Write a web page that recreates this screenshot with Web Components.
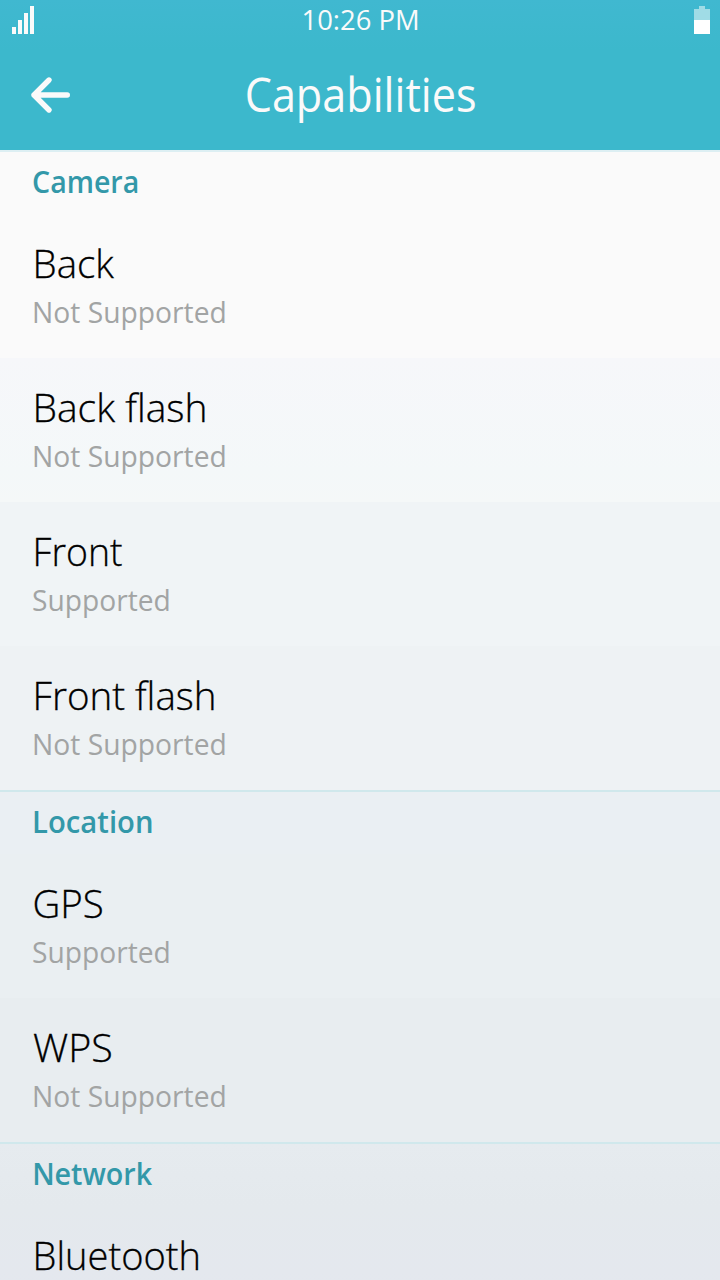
<!DOCTYPE html>
<html lang="en"><head><meta charset="utf-8"><title>Capabilities</title>
<style>
html,body{margin:0;height:1280px;overflow:hidden;background:#fafafa;font-family:"Open Sans","Noto Sans",sans-serif}
</style></head><body>
<capabilities-page></capabilities-page>
<script>
const define=(name,html,ready)=>customElements.define(name,class extends HTMLElement{
  connectedCallback(){
    if(this.shadowRoot)return;
    const t=document.createElement('template');t.innerHTML=html;
    this.attachShadow({mode:'open'}).append(t.content.cloneNode(true));
    if(ready)ready(this,this.shadowRoot);
  }
});
// Text scaled horizontally so that its visible glyphs span from "start" to "end".
define('fit-text',`<style>:host{display:block;white-space:nowrap}span{display:inline-block;transform-origin:0 50%}</style><span><slot></slot></span>`,(el,root)=>{
  const cs=getComputedStyle(el),c=document.createElement('canvas').getContext('2d');
  c.font=`${cs.fontWeight} ${cs.fontSize} ${cs.fontFamily}`;
  const m=c.measureText(el.textContent),a=+el.getAttribute('start'),b=+el.getAttribute('end');
  const s=(b-a)/(m.actualBoundingBoxLeft+m.actualBoundingBoxRight);
  root.querySelector('span').style.transform=`translateX(${a+m.actualBoundingBoxLeft*s}px) scaleX(${s})`;
});
define('status-bar',`<style>:host{display:grid;grid-template-columns:302px 1fr 28px;height:40px;color:#fafafa;font-size:27.5px;line-height:40px}svg{display:block}</style>
<svg width="302" height="40" fill="#fafafa"><path d="M12 27h4v7h-4zM18 20h4v14h-4zM24 13h4v21h-4zM30 6h4v28h-4z"/></svg>
<fit-text start="1.5" end="116">10:26 PM</fit-text>
<svg width="28" height="40"><path fill="#a0dce6" d="M7 6h6v3h5v11H2V9h5z"/><path fill="#fff" d="M2 20h16v14H2z"/></svg>`);
define('title-bar',`<style>:host{display:grid;grid-template-columns:244px 1fr;height:110px;color:#fafafa;font-size:47.5px;line-height:107px}svg{display:block}</style>
<svg width="244" height="110" fill="none" stroke="#fafafa" stroke-width="5.4" stroke-linecap="round" stroke-linejoin="round"><path d="M67.3 55H34M49 40 34 55 49 70"/></svg>
<fit-text start="2.5" end="231">Capabilities</fit-text>`);
define('section-header',`<style>:host{display:block;height:62px;border-top:2px solid var(--line,#d0e8ec);background:var(--bg);color:#3398a9;font-size:30.8px;font-weight:600;line-height:58px}</style><div></div>`,(el,r)=>{
  const f=document.createElement('fit-text');f.setAttribute('start',el.getAttribute('start'));f.setAttribute('end',el.getAttribute('end'));f.textContent=el.getAttribute('label');r.querySelector('div').append(f);
});
define('capability-row',`<style>:host{display:block;box-sizing:border-box;height:144px;padding-top:24px;background:var(--bg)}.name{color:#000;font-size:39px;font-weight:300;line-height:49px;-webkit-text-stroke:.3px #000}.state{color:#a2a4a4;font-size:28.3px;line-height:40px;margin-top:5px}</style><fit-text class="name"></fit-text><fit-text class="state"></fit-text>`,(el,r)=>{
  const put=(q,text,a,b)=>{
    const old=r.querySelector(q),f=document.createElement('fit-text');
    f.className=old.className;f.setAttribute('start',a);f.setAttribute('end',b);f.textContent=text;old.replaceWith(f);
  };
  put('.name',el.getAttribute('label'),el.getAttribute('start'),el.getAttribute('end'));
  const state=el.getAttribute('state');
  if(state==='yes')put('.state','Supported',33,168.5);
  else if(state==='no')put('.state','Not Supported',34,224.5);
  else r.querySelector('.state').remove();
});
define('capabilities-page',`<style>:host{display:flex;flex-direction:column;height:1280px;overflow:hidden}
header{background:linear-gradient(#40b8d0,#3cb8cc 50px,#3cb8cc)}
main{flex:1;min-height:0;overflow:hidden}</style>
<header><status-bar></status-bar><title-bar></title-bar></header>
<main>
<section-header label="Camera" start="33" end="137.5" style="--bg:#fafafa;--line:#ddeff3"></section-header>
<capability-row state="no" label="Back" start="35.5" end="114" style="--bg:#fafafa"></capability-row>
<capability-row state="no" label="Back flash" start="35.5" end="204.5" style="--bg:linear-gradient(#f6f7fa,#f4f8f9 80%,#f5f8f8)"></capability-row>
<capability-row state="yes" label="Front" start="35.5" end="122.5" style="--bg:#f0f4f6"></capability-row>
<capability-row state="no" label="Front flash" start="35.5" end="213.5" style="--bg:#eef2f4"></capability-row>
<section-header label="Location" start="34" end="152" style="--bg:#eaeff3"></section-header>
<capability-row state="yes" label="GPS" start="34.5" end="102.5" style="--bg:#eaeff2"></capability-row>
<capability-row state="no" label="WPS" start="33" end="111.5" style="--bg:#e8edf0"></capability-row>
<section-header label="Network" start="34" end="152.5" style="--bg:linear-gradient(#e6ebef,#e4e9ed)"></section-header>
<capability-row label="Bluetooth" start="35.5" end="198" style="--bg:linear-gradient(#e4e9ed,#e4e8ee 66px,#e3e6ef)"></capability-row>
</main>`);
</script>
</body></html>
